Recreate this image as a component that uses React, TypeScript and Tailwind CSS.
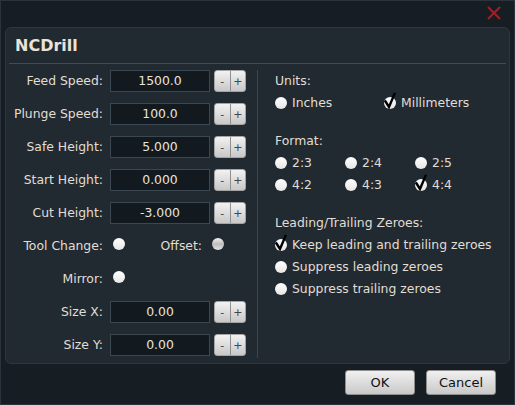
import React from 'react';

const font = { fontFamily: '"DejaVu Sans", Verdana, sans-serif' };

const Radio = ({ checked = false, dim = false }: { checked?: boolean; dim?: boolean }) => (
  <span className="relative inline-block w-[12px] h-[12px] shrink-0">
    <span
      className={
        dim
          ? 'absolute inset-0 rounded-full bg-gradient-to-b from-[#f4f4f4] via-[#bdbdbd] to-[#e2e2e2]'
          : 'absolute inset-0 rounded-full bg-gradient-to-b from-[#ffffff] to-[#e6e6e6]'
      }
    />
    {checked && (
      <svg className="absolute left-[-1px] top-[-5px]" width="15" height="17" viewBox="0 0 15 17">
        <path d="M2.5 9.5 L6 15 L11.5 2" fill="none" stroke="#000" strokeWidth="2.4" strokeLinecap="square" />
      </svg>
    )}
  </span>
);

const Stepper = () => (
  <div className="flex h-[22px] w-[32px] rounded-[3px] overflow-hidden bg-gradient-to-b from-[#f2f2f2] to-[#c8c8c8] border border-[#a4a4a4] text-[#444] text-[11px] leading-none">
    <span className="flex-1 flex items-center justify-center border-r border-[#8f8f8f]">-</span>
    <span className="flex-1 flex items-center justify-center">+</span>
  </div>
);

const NumRow = ({ label, value }: { label: string; value: string }) => (
  <div className="flex items-center h-[22px]">
    <span className="w-[98px] text-right pr-[1px] whitespace-nowrap">{label}</span>
    <div className="ml-[6px] w-[100px] h-[22px] bg-[#131a1f] border border-[#3b4852] flex items-center justify-center text-[#e8e3db]">
      {value}
    </div>
    <div className="ml-[4px]">
      <Stepper />
    </div>
  </div>
);

const Option = ({ label, checked = false, w }: { label: string; checked?: boolean; w?: string }) => (
  <div className={`flex items-center gap-[5px] h-[22px] ${w ?? ''}`}>
    <Radio checked={checked} />
    <span className="whitespace-nowrap">{label}</span>
  </div>
);

export default function App() {
  return (
    <div
      style={font}
      className="w-[515px] h-[405px] bg-[#161d23] border border-[#2b343c] flex flex-col text-[12.4px] text-[#e2ddd5] select-none"
    >
      {/* title bar */}
      <div className="h-[26px] flex justify-end items-start pr-[13px] pt-[5px]">
        <svg width="14" height="14" viewBox="0 0 14 14">
          <path d="M1 1 L13 13 M13 1 L1 13" stroke="#a51d26" strokeWidth="2" />
        </svg>
      </div>

      {/* panel */}
      <div className="mx-[4px] w-[505px] h-[337px] bg-[#212a30] border border-[#2d373f] rounded-[6px] flex flex-col">
        <div className="h-[35px] flex items-center pl-[9px] pt-[1px]">
          <span className="text-[16px] font-bold text-[#ebe3d9]">NCDrill</span>
        </div>
        <div className="mx-[3px] h-px bg-[#3f4c57]" />

        <div className="flex flex-1 pt-[6px] pb-[5px]">
          {/* left column */}
          <div className="w-[251px] flex flex-col gap-[11px]">
            <NumRow label="Feed Speed:" value="1500.0" />
            <NumRow label="Plunge Speed:" value="100.0" />
            <NumRow label="Safe Height:" value="5.000" />
            <NumRow label="Start Height:" value="0.000" />
            <NumRow label="Cut Height:" value="-3.000" />
            <div className="flex items-center h-[22px]">
              <span className="w-[98px] text-right pr-[1px] whitespace-nowrap">Tool Change:</span>
              <span className="ml-[9px]">
                <Radio />
              </span>
              <span className="w-[78px] text-right pr-[1px]">Offset:</span>
              <span className="ml-[9px]">
                <Radio dim />
              </span>
            </div>
            <div className="flex items-center h-[22px]">
              <span className="w-[98px] text-right pr-[1px]">Mirror:</span>
              <span className="ml-[9px]">
                <Radio />
              </span>
            </div>
            <NumRow label="Size X:" value="0.00" />
            <NumRow label="Size Y:" value="0.00" />
          </div>

          {/* divider */}
          <div className="w-px bg-[#3a4650]" />

          {/* right column */}
          <div className="flex-1 pl-[17px] flex flex-col">
            <div className="h-[22px] flex items-center">Units:</div>
            <div className="flex">
              <Option label="Inches" w="w-[109px]" />
              <Option label="Millimeters" checked />
            </div>

            <div className="h-[22px] flex items-center mt-[16px]">Format:</div>
            <div className="flex">
              <Option label="2:3" w="w-[70px]" />
              <Option label="2:4" w="w-[70px]" />
              <Option label="2:5" />
            </div>
            <div className="flex">
              <Option label="4:2" w="w-[70px]" />
              <Option label="4:3" w="w-[70px]" />
              <Option label="4:4" checked />
            </div>

            <div className="h-[22px] flex items-center mt-[16px]">Leading/Trailing Zeroes:</div>
            <Option label="Keep leading and trailing zeroes" checked />
            <Option label="Suppress leading zeroes" />
            <Option label="Suppress trailing zeroes" />
          </div>
        </div>
      </div>

      {/* buttons */}
      <div className="flex justify-end gap-[11px] pr-[18px] pt-[6px]">
        <button className="w-[70px] h-[25px] rounded-[3px] bg-gradient-to-b from-[#f0f0f0] to-[#c9c9c9] border border-[#8d8d8d] text-[#111] text-[13px]">
          OK
        </button>
        <button className="w-[70px] h-[25px] rounded-[3px] bg-gradient-to-b from-[#f0f0f0] to-[#c9c9c9] border border-[#8d8d8d] text-[#111] text-[13px]">
          Cancel
        </button>
      </div>
    </div>
  );
}
